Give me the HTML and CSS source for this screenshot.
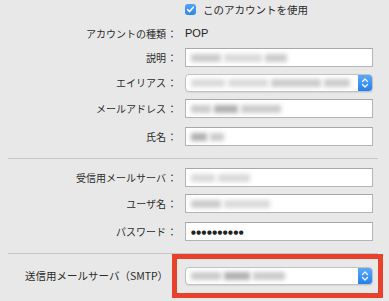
FILE: index.html
```html
<!DOCTYPE html>
<html lang="ja">
<head>
    <meta charset="UTF-8">
    <meta name="viewport" content="width=device-width, initial-scale=1.0">
    <title>アカウント情報</title>
    <link rel="stylesheet" href="styles.css">
</head>
<body>
    <div class="panel">
        <div class="row row-check">
            <div class="label"></div>
            <div class="field">
                <span class="checkbox">
                    <svg width="11" height="11" viewBox="0 0 11 11"><path d="M2.6 5.6 L4.6 7.6 L8.4 3.2" fill="none" stroke="#fff" stroke-width="1.6" stroke-linecap="round" stroke-linejoin="round"/></svg>
                </span>
                <span class="check-text">このアカウントを使用</span>
            </div>
        </div>

        <div class="row row-pop">
            <div class="label">アカウントの種類<span class="colon">：</span></div>
            <div class="field"><span class="value">POP</span></div>
        </div>

        <div class="row row-desc">
            <div class="label">説明<span class="colon">：</span></div>
            <div class="field">
                <div class="input">
                    <span class="blur" style="width: 30px"></span>
                    <span class="blur light" style="width: 38px"></span>
                    <span class="blur" style="width: 22px"></span>
                </div>
            </div>
        </div>

        <div class="row row-alias">
            <div class="label">エイリアス<span class="colon">：</span></div>
            <div class="field">
                <div class="popup">
                    <div class="popup-value">
                        <span class="blur light" style="width: 34px"></span>
                        <span class="blur light" style="width: 40px"></span>
                        <span class="blur" style="width: 50px"></span>
                        <span class="blur" style="width: 26px"></span>
                    </div>
                    <div class="popup-button">
                        <svg width="8" height="12" viewBox="0 0 8 12"><path d="M1.5 4.5 L4 2 L6.5 4.5 M1.5 7.5 L4 10 L6.5 7.5" fill="none" stroke="#fff" stroke-width="1.3" stroke-linecap="round" stroke-linejoin="round"/></svg>
                    </div>
                </div>
            </div>
        </div>

        <div class="row row-mail">
            <div class="label">メールアドレス<span class="colon">：</span></div>
            <div class="field">
                <div class="input">
                    <span class="blur" style="width: 20px"></span>
                    <span class="blur dark" style="width: 24px"></span>
                    <span class="blur" style="width: 40px"></span>
                </div>
            </div>
        </div>

        <div class="row row-name">
            <div class="label">氏名<span class="colon">：</span></div>
            <div class="field">
                <div class="input">
                    <span class="blur dark" style="width: 16px"></span>
                    <span class="blur" style="width: 14px"></span>
                </div>
            </div>
        </div>

        <div class="divider"></div>

        <div class="row row-in">
            <div class="label">受信用メールサーバ<span class="colon">：</span></div>
            <div class="field">
                <div class="input">
                    <span class="blur light" style="width: 24px"></span>
                    <span class="blur light" style="width: 32px"></span>
                </div>
            </div>
        </div>

        <div class="row row-user">
            <div class="label">ユーザ名<span class="colon">：</span></div>
            <div class="field">
                <div class="input">
                    <span class="blur" style="width: 30px"></span>
                    <span class="blur light" style="width: 46px"></span>
                </div>
            </div>
        </div>

        <div class="row row-pass">
            <div class="label">パスワード<span class="colon">：</span></div>
            <div class="field">
                <div class="input">
                    <span class="dots">●●●●●●●●●●</span>
                </div>
            </div>
        </div>

        <div class="divider divider-low"></div>

        <div class="row row-smtp">
            <div class="label label-smtp">送信用メールサーバ（SMTP）</div>
            <div class="field field-marked">
                <div class="popup">
                    <div class="popup-value">
                        <span class="blur" style="width: 30px"></span>
                        <span class="blur dark" style="width: 26px"></span>
                        <span class="blur" style="width: 32px"></span>
                    </div>
                    <div class="popup-button">
                        <svg width="8" height="12" viewBox="0 0 8 12"><path d="M1.5 4.5 L4 2 L6.5 4.5 M1.5 7.5 L4 10 L6.5 7.5" fill="none" stroke="#fff" stroke-width="1.3" stroke-linecap="round" stroke-linejoin="round"/></svg>
                    </div>
                </div>
                <div class="mark"></div>
            </div>
        </div>
    </div>
</body>
</html>
```

FILE: styles.css
```css
body {
    margin: 0;
    background-color: #e8e8e8;
    font-family: "Noto Sans CJK JP", "Liberation Sans", sans-serif;
    font-size: 10px;
    color: #2b2b2b;
}
.panel {
    width: 389px;
    height: 301px;
    overflow: hidden;
}
.row {
    display: flex;
    align-items: center;
    height: 19px;
    margin-top: 7px;
}
.row-check {
    height: 18px;
    margin-top: 0;
}
.row-pop {
    height: 18px;
    margin-top: 6px;
}
.row-desc,
.row-alias {
    margin-top: 6px;
}
.row-name,
.row-pass {
    margin-top: 9px;
}
.row-in {
    margin-top: 9px;
}
.row-smtp {
    margin-top: 12px;
    height: 19px;
}
.label {
    width: 177px;
    padding-right: 8px;
    text-align: right;
    white-space: nowrap;
    line-height: 19px;
}
.colon {
    margin-left: 1px;
}
.label-smtp {
    width: 135px;
    padding-right: 25px;
    padding-left: 25px;
    text-align: left;
    font-size: 10.5px;
}
.field {
    width: 188px;
    display: flex;
    align-items: center;
    position: relative;
}
.checkbox {
    width: 11px;
    height: 11px;
    border-radius: 3px;
    background: linear-gradient(#4fa4f7, #2a86ee);
    display: inline-flex;
    margin-right: 7px;
}
.check-text {
    font-size: 10.5px;
}
.value {
    font-family: "Liberation Sans", sans-serif;
    font-size: 11px;
    color: #222;
}
.input {
    box-sizing: border-box;
    width: 188px;
    height: 19px;
    background-color: #ffffff;
    border: 1px solid #b4b4b4;
    border-top-color: #a8a8a8;
    display: flex;
    align-items: center;
    padding-left: 5px;
    gap: 3px;
}
.blur {
    display: inline-block;
    height: 8px;
    background-color: #cbcbcb;
    filter: blur(2px);
}
.blur.light {
    background-color: #dadada;
}
.blur.dark {
    background-color: #b0b0b0;
}
.dots {
    font-family: "DejaVu Sans", sans-serif;
    font-size: 5.5px;
    letter-spacing: 0.5px;
    color: #222;
}
.popup {
    box-sizing: border-box;
    width: 188px;
    height: 18px;
    background-color: #ffffff;
    border: 1px solid #c2c2c2;
    border-radius: 4px;
    box-shadow: 0 1px 1px rgba(0, 0, 0, 0.08);
    display: flex;
    overflow: hidden;
}
.popup-value {
    flex: 1;
    display: flex;
    align-items: center;
    padding-left: 5px;
    gap: 3px;
}
.popup-button {
    width: 14px;
    background: linear-gradient(#5aa9f8, #2680ec);
    display: flex;
    align-items: center;
    justify-content: center;
}
.divider {
    margin: 12px 11px 0 8px;
    height: 1px;
    background-color: #c6c6c6;
}
.divider-low {
    margin-top: 12px;
}
.mark {
    position: absolute;
    left: -13px;
    right: -10px;
    top: -13px;
    bottom: -13px;
    border: 5px solid #e8412c;
}
```
